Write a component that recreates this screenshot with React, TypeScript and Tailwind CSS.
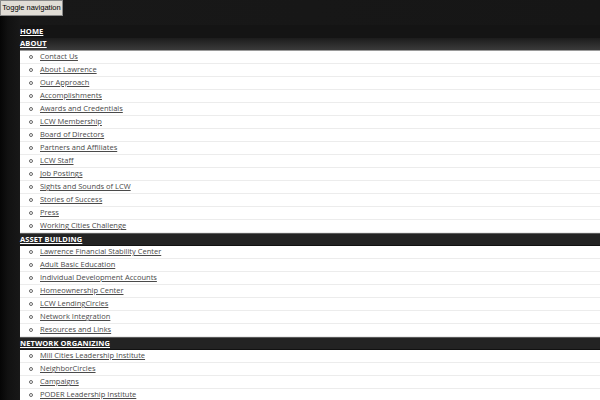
import React from "react";

const sections: { title: string; items: string[]; bar: boolean }[] = [
  {
    title: "About",
    bar: false,
    items: [
      "Contact Us",
      "About Lawrence",
      "Our Approach",
      "Accomplishments",
      "Awards and Credentials",
      "LCW Membership",
      "Board of Directors",
      "Partners and Affiliates",
      "LCW Staff",
      "Job Postings",
      "Sights and Sounds of LCW",
      "Stories of Success",
      "Press",
      "Working Cities Challenge",
    ],
  },
  {
    title: "Asset Building",
    bar: true,
    items: [
      "Lawrence Financial Stability Center",
      "Adult Basic Education",
      "Individual Development Accounts",
      "Homeownership Center",
      "LCW LendingCircles",
      "Network Integration",
      "Resources and Links",
    ],
  },
  {
    title: "Network Organizing",
    bar: true,
    items: [
      "Mill Cities Leadership Institute",
      "NeighborCircles",
      "Campaigns",
      "PODER Leadership Institute",
    ],
  },
];

function Heading({ text, bar }: { text: string; bar: boolean }) {
  return (
    <div
      className={
        bar
          ? "h-[13px] flex items-center bg-[#232323] border-t border-t-[#5a5a5a] border-b border-b-[#111]"
          : "h-[13px] flex items-center"
      }
    >
      <a className="text-white font-bold uppercase underline text-[7.5px] leading-none tracking-[0.1px] font-['Open_Sans',sans-serif]">
        {text}
      </a>
    </div>
  );
}

export default function App() {
  return (
    <div className="w-[600px] h-[400px] overflow-hidden bg-[linear-gradient(to_right,#050505,#111_8px,#181818_20px,#161616)] font-['Open_Sans',sans-serif]">
      <button className="block h-[16px] w-[63px] px-0 bg-[#e1ddd6] border border-[#8a8a8a] text-[7.5px] leading-none text-black font-['Liberation_Sans',sans-serif] whitespace-nowrap">
        Toggle navigation
      </button>
      <div className="pt-[9px] pl-[20px]">
        <div className="bg-[linear-gradient(to_bottom,#141414_0,#141414_18px,#2c2c2c_26px)]">
          <Heading text="Home" bar={false} />
        </div>
        {sections.map((s) => (
          <div key={s.title}>
            {s.bar ? (
              <Heading text={s.title} bar />
            ) : (
              <div className="bg-[linear-gradient(to_bottom,#1c1c1c,#3a3a3a)] border-b border-b-[#9a9a9a] h-[13px] flex items-center">
                <a className="text-white font-bold uppercase underline text-[7.5px] leading-none tracking-[0.1px]">
                  {s.title}
                </a>
              </div>
            )}
            <ul className="bg-white">
              {s.items.map((it) => (
                <li
                  key={it}
                  className="h-[13px] flex items-center border-b border-b-[#ececec] pl-[9px]"
                >
                  <span className="w-[4px] h-[4px] rounded-full border border-[#666] mr-[7px]" />
                  <a className="text-[#4a4a4a] underline text-[7.5px] leading-none">
                    {it}
                  </a>
                </li>
              ))}
            </ul>
          </div>
        ))}
      </div>
    </div>
  );
}
